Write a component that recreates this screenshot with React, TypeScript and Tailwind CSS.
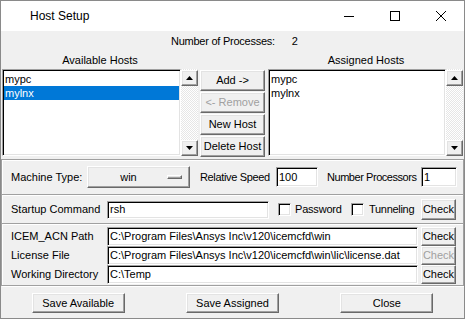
const sunken =
  "border border-t-[#a0a0a0] border-l-[#a0a0a0] border-r-white border-b-white shadow-[inset_1px_1px_0_#000,inset_-1px_-1px_0_#e3e3e3] bg-white";
const raised =
  "border border-t-white border-l-white border-r-[#696969] border-b-[#696969] shadow-[inset_-1px_-1px_0_#a0a0a0,inset_1px_1px_0_#e3e3e3] bg-[#f0f0f0]";
const sep = "h-[2px] border-t border-t-[#a0a0a0] border-b border-b-white";

function Btn({ label, cls, disabled }: { label: string; cls: string; disabled?: boolean }) {
  return (
    <div className={`${raised} ${cls} flex items-center justify-center leading-none whitespace-nowrap ${disabled ? "text-[#a0a0a0]" : "text-black"}`}>
      {label}
    </div>
  );
}

function Arrow({ up }: { up?: boolean }) {
  return (
    <div className={`${raised} w-full h-[16px] flex items-center justify-center`}>
      <svg width="7" height="4" viewBox="0 0 7 4">
        {up ? <polygon points="3.5,0 7,4 0,4" fill="#000" /> : <polygon points="0,0 7,0 3.5,4" fill="#000" />}
      </svg>
    </div>
  );
}

function Scrollbar() {
  return (
    <div className="w-[17px] h-[87px] pt-[1px] flex flex-col justify-between bg-[repeating-conic-gradient(#ffffff_0_25%,#e6e6e6_0_50%)] bg-[length:2px_2px]">
      <Arrow up />
      <Arrow />
    </div>
  );
}

function ListBox({ items, selected, width }: { items: string[]; selected?: number; width: string }) {
  return (
    <div className={`${sunken} ${width} h-[87px] p-[1px] pt-[2px]`}>
      {items.map((it, i) => (
        <div
          key={it}
          className={`h-[14px] leading-[14px] pl-[1px] ${i === selected ? "bg-[#0078d7] text-white" : "text-black"}`}
        >
          {it}
        </div>
      ))}
    </div>
  );
}

function Check() {
  return <div className={`${sunken} w-[13px] h-[13px]`} />;
}

function PathRow({ label, value, disabled }: { label: string; value: string; disabled?: boolean }) {
  return (
    <div className="flex items-center h-[19px]">
      <div className="w-[96px] whitespace-nowrap">{label}</div>
      <div className={`${sunken} w-[311px] h-[19px] pl-[2px] flex items-center whitespace-nowrap`}>{value}</div>
      <Btn label="Check" cls="ml-[3px] w-[35px] h-[19px]" disabled={disabled} />
    </div>
  );
}

export default function App() {
  return (
    <div className="w-[465px] h-[319px] border border-[#8a8a8a] bg-[#f0f0f0] flex flex-col overflow-hidden font-['Liberation_Sans',Arial,sans-serif] text-[11px] text-black">
      {/* Title bar */}
      <div className="h-[30px] bg-white flex items-center">
        <div className="pl-[29px] flex-1 text-[12px]">Host Setup</div>
        <div className="w-[46px] h-[30px] flex items-center justify-center">
          <svg width="10" height="10" viewBox="0 0 10 10">
            <line x1="0" y1="5.5" x2="10" y2="5.5" stroke="#000" strokeWidth="1" />
          </svg>
        </div>
        <div className="w-[46px] h-[30px] flex items-center justify-center">
          <svg width="10" height="10" viewBox="0 0 10 10">
            <rect x="0.5" y="0.5" width="9" height="9" fill="none" stroke="#000" strokeWidth="1" />
          </svg>
        </div>
        <div className="w-[46px] h-[30px] flex items-center justify-center">
          <svg width="10" height="10" viewBox="0 0 10 10">
            <path d="M0 0 L10 10 M10 0 L0 10" stroke="#000" strokeWidth="1" />
          </svg>
        </div>
      </div>

      {/* Body */}
      <div className="flex-1 flex flex-col">
        <div className="h-[20px] flex items-center justify-center gap-[17px] pl-[4px]">
          <span className="tracking-[-0.25px]">Number of Processes:</span>
          <span>2</span>
        </div>
        <div className="h-[18px] flex items-center">
          <div className="ml-[1px] w-[196px] text-center">Available Hosts</div>
          <div className="flex-1 text-center pl-[70px]">Assigned Hosts</div>
        </div>
        <div className="h-[88px] flex items-start">
          <div className="ml-[1px] flex">
            <ListBox items={["mypc", "mylnx"]} selected={1} width="w-[179px]" />
            <Scrollbar />
          </div>
          <div className="ml-[2px] mt-[1px] flex flex-col gap-[1px]">
            <Btn label="Add ->" cls="w-[65px] h-[21px]" />
            <Btn label="<- Remove" cls="w-[65px] h-[21px]" disabled />
            <Btn label="New Host" cls="w-[65px] h-[21px]" />
            <Btn label="Delete Host" cls="w-[65px] h-[21px]" />
          </div>
          <div className="ml-[3px] flex">
            <ListBox items={["mypc", "mylnx"]} width="w-[178px]" />
            <Scrollbar />
          </div>
        </div>

        {/* Settings panel */}
        <div className="mt-[2px] border border-[#a0a0a0] shadow-[inset_1px_1px_0_#fff,1px_1px_0_#fff] flex flex-col">
          <div className="h-[34px] flex items-center pl-[9px] whitespace-nowrap">
            <div className="w-[76px]">Machine Type:</div>
            <div className={`${raised} w-[103px] h-[22px] flex items-center`}>
              <div className="flex-1 text-center pl-[2px]">win</div>
              <div className={`${raised} w-[15px] h-[4px] mr-[7px]`} />
            </div>
            <div className="ml-[10px] w-[74px] tracking-[-0.35px]">Relative Speed</div>
            <div className={`${sunken} ml-[2px] w-[42px] h-[20px] pl-[2px] flex items-center`}>100</div>
            <div className="ml-[9px] w-[92px] tracking-[-0.45px]">Number Processors</div>
            <div className={`${sunken} ml-[2px] w-[36px] h-[20px] pl-[2px] flex items-center`}>1</div>
          </div>
          <div className={sep} />
          <div className="h-[27px] flex items-center pl-[9px] whitespace-nowrap">
            <div className="w-[96px]">Startup Command</div>
            <div className={`${sunken} w-[162px] h-[18px] pl-[2px] flex items-center`}>rsh</div>
            <div className="ml-[9px]">
              <Check />
            </div>
            <div className="ml-[4px] w-[56px] tracking-[-0.2px]">Password</div>
            <Check />
            <div className="ml-[5px] w-[49px] tracking-[-0.3px]">Tunneling</div>
            <Btn label="Check" cls="ml-[3px] w-[35px] h-[21px]" />
          </div>
          <div className={sep} />
          <div className="h-[60px] pt-[2px] pl-[9px] flex flex-col">
            <PathRow label="ICEM_ACN Path" value="C:\Program Files\Ansys Inc\v120\icemcfd\win" />
            <PathRow label="License File" value="C:\Program Files\Ansys Inc\v120\icemcfd\win\lic\license.dat" disabled />
            <PathRow label="Working Directory" value="C:\Temp" />
          </div>
        </div>

        {/* Bottom buttons */}
        <div className="flex-1 grid grid-cols-3 items-start pt-[7px]">
          <div className="flex justify-center">
            <Btn label="Save Available" cls="w-[93px] h-[20px]" />
          </div>
          <div className="flex justify-center">
            <Btn label="Save Assigned" cls="w-[93px] h-[20px]" />
          </div>
          <div className="flex justify-center">
            <Btn label="Close" cls="w-[93px] h-[20px]" />
          </div>
        </div>
      </div>
    </div>
  );
}
